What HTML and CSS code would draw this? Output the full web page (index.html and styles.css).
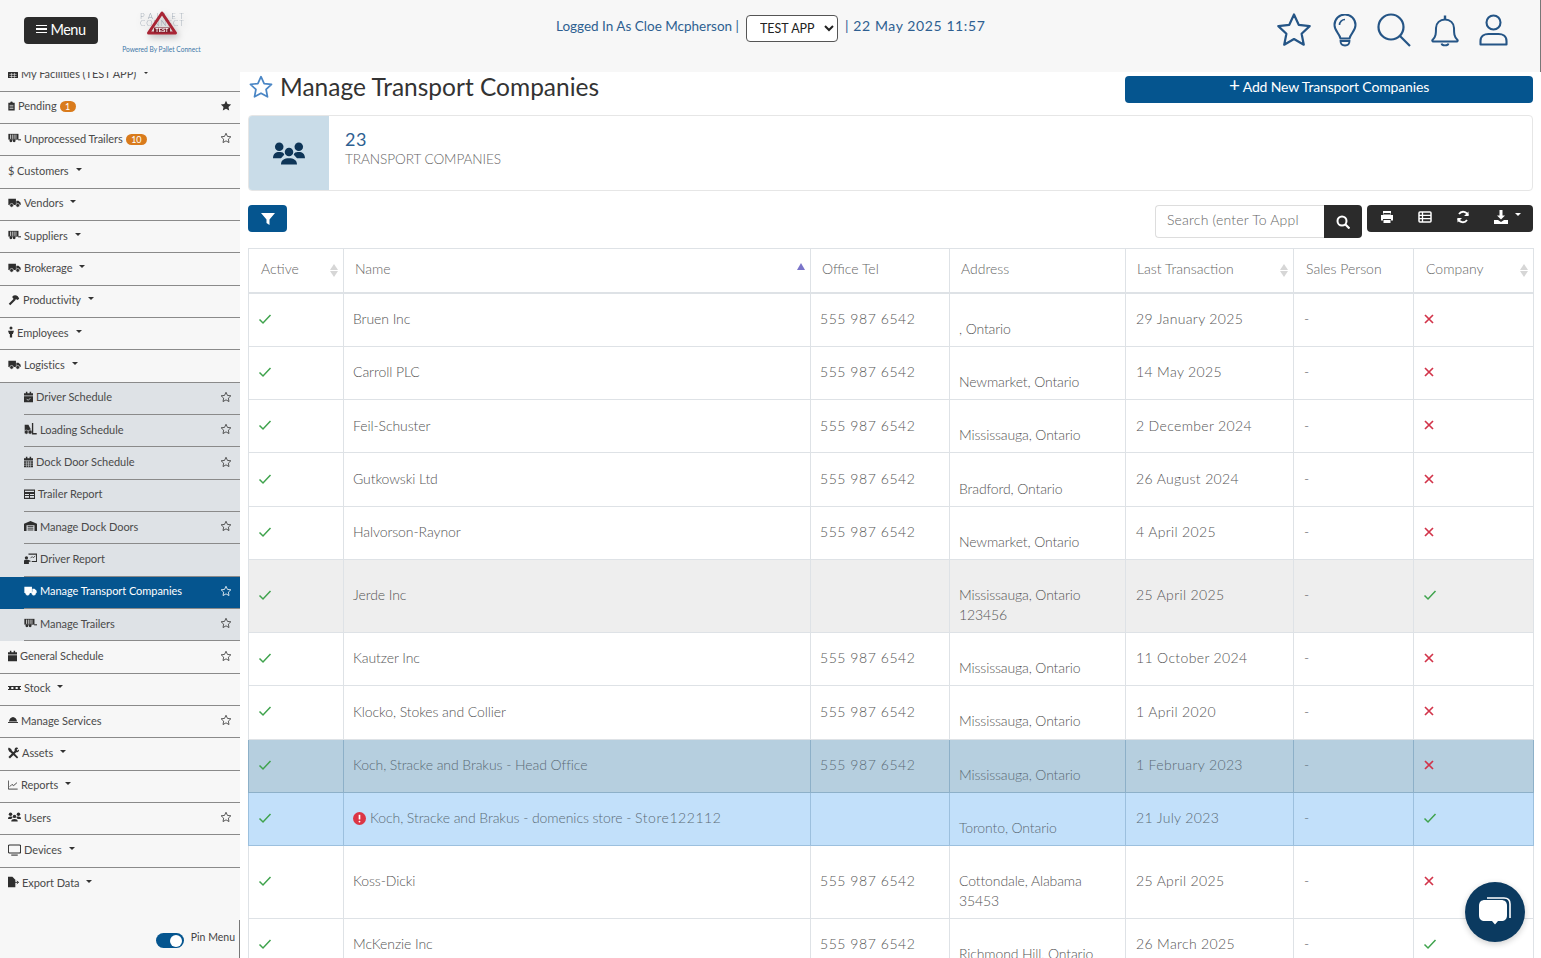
FILE: index.html
```html
<!DOCTYPE html>
<html lang="en">
<head>
<meta charset="utf-8">
<title>Manage Transport Companies</title>
<link rel="stylesheet" href="styles.css">
</head>
<body>
<svg class="defs" width="0" height="0">
  <defs>
    <symbol id="i-star" viewBox="0 0 24 24"><path d="M12 2.500l2.900 6.300 6.800.8-5 4.700 1.300 6.800-6-3.400-6 3.400 1.300-6.800-5-4.700 6.800-.8z" fill="none" stroke="currentColor" stroke-width="1.600" stroke-linejoin="round"/></symbol>
    <symbol id="i-starf" viewBox="0 0 24 24"><path d="M12 1.500l3.100 6.600 7.200.9-5.300 5 1.400 7.200-6.400-3.600-6.400 3.600 1.400-7.200-5.300-5 7.200-.9z" fill="currentColor"/></symbol>
    <symbol id="i-clip" viewBox="2.500 .5 11 15"><path d="M3 3h3a2 2 0 0 1 4 0h3v12H3z" fill="currentColor"/><path d="M5 7h6M5 9.500h6M5 12h6" stroke="#f7f7f7"/></symbol>
    <symbol id="i-trailer" viewBox="0 2.500 18 12.500"><path d="M.5 3h14v8H.5z" fill="currentColor"/><path d="M3.500 4v6M6 4v6M8.500 4v6M11 4v6" stroke="#f7f7f7"/><circle cx="4" cy="12.500" r="2" fill="currentColor"/><circle cx="8.500" cy="12.500" r="2" fill="currentColor"/><path d="M14 10.500h4V12h-4z" fill="currentColor"/></symbol>
    <symbol id="i-truck" viewBox="0 2.500 18 12.500"><path d="M.5 3h10.500v8.500H.5zM11.500 5.500h3l3 3v3h-6z" fill="currentColor"/><circle cx="5" cy="12" r="2.600" fill="currentColor" stroke="#f7f7f7" stroke-width=".8"/><circle cx="13.500" cy="12" r="2.600" fill="currentColor" stroke="#f7f7f7" stroke-width=".8"/></symbol>
    <symbol id="i-hammer" viewBox="0 2 16 14"><path d="M1 14l7-7 2 2-7 7z" fill="currentColor"/><path d="M6 4c2-2 5-2 7 0l2 3-2 2-2-1-2 1-3-3z" fill="currentColor"/></symbol>
    <symbol id="i-person" viewBox="1 0 8 15.500"><circle cx="5" cy="2.500" r="2" fill="currentColor"/><path d="M1 6h8l-1.500 4.500H6.500V15h-3v-4.500H2.500z" fill="currentColor"/></symbol>
    <symbol id="i-calcheck" viewBox="2 1 12 14"><path d="M2 3h12v3H2zM2 7h12v8H2zM4.500 1h2v2h-2zM9.500 1h2v2h-2z" fill="currentColor"/><path d="M5.500 10.500l2 2 3-3" stroke="#dee2e6" fill="none"/></symbol>
    <symbol id="i-cal" viewBox="2 1 12 14"><path d="M2 3h12v3H2zM2 7h12v8H2zM4.500 1h2v2h-2zM9.500 1h2v2h-2z" fill="currentColor"/></symbol>
    <symbol id="i-caldays" viewBox="2 1 12 14"><path d="M2 3h12v3H2zM2 7h12v8H2zM4.500 1h2v2h-2zM9.500 1h2v2h-2z" fill="currentColor"/><path d="M2 9.500h12M2 12.300h12M5.500 7v8M8 7v8M10.500 7v8" stroke="#dee2e6" stroke-width=".7"/></symbol>
    <symbol id="i-fork" viewBox="1 1 15 14.500"><path d="M1.500 8V3h4.500l2.500 5v2.500h-7z" fill="currentColor"/><circle cx="3.500" cy="12" r="2.500" fill="currentColor" stroke="#dee2e6" stroke-width=".6"/><circle cx="8" cy="12" r="2.500" fill="currentColor" stroke="#dee2e6" stroke-width=".6"/><path d="M11 1v13h5" stroke="currentColor" stroke-width="1.600" fill="none"/></symbol>
    <symbol id="i-table" viewBox="1 2 14 12"><path d="M1.500 3h13v10.500h-13z" fill="none" stroke="currentColor" stroke-width="1.500"/><path d="M1.500 6h13v1.500h-13zM1.500 9.800h13M8 6v7" stroke="currentColor" stroke-width="1.300" fill="currentColor"/></symbol>
    <symbol id="i-ware" viewBox="0 1 18 14"><path d="M9 1l9 4v10h-3.500V7h-11v8H0V5z" fill="currentColor"/><path d="M5 8.500h8M5 11h8M5 13.500h8" stroke="currentColor" stroke-width="1.300"/></symbol>
    <symbol id="i-board" viewBox="1 1.500 16 13"><path d="M6.500 2h10v9h-6" fill="none" stroke="currentColor" stroke-width="1.300"/><circle cx="4" cy="6.500" r="2" fill="currentColor"/><path d="M1 14v-3.500c0-1 1-1.500 2-1.500h3l3 1v1.500H7V14z" fill="currentColor"/><path d="M9 7l2-2 1.500 1.500L15 4" stroke="currentColor" fill="none"/></symbol>
    <symbol id="i-pallet" viewBox="0 7 18 6.500"><path d="M0 7.500h18v1.500H0zM0 11.500h18V13H0zM1.500 9h3v2.500h-3zM7.500 9h3v2.500h-3zM13.500 9h3v2.500h-3z" fill="currentColor"/></symbol>
    <symbol id="i-cloche" viewBox="0 4 16 10.500"><path d="M1.500 11.500C2 7.500 5 5 8 4.500c3 .5 6 3 6.500 7z" fill="currentColor"/><path d="M0 12.500h16V14H0z" fill="currentColor"/></symbol>
    <symbol id="i-tools" viewBox="1 1 14 14"><path d="M2 1l3 2 1 2 8 8.500-1.500 1.500L4 7 2.500 6 1 3zM11.500 1c1.500 0 2 .5 2.500 1l-2 2 1 1 2-1.500c.5 2-1.500 4-3.500 3.500L3.500 15 1.500 13l8-8C9 3 10 1 11.500 1z" fill="currentColor"/></symbol>
    <symbol id="i-chart" viewBox="1 2 14 12.500"><path d="M1.500 2v12h13" fill="none" stroke="currentColor" stroke-width="1.200"/><path d="M3.500 10.500l3-3 2.500 1.500 4.500-4" fill="none" stroke="currentColor" stroke-width="1.200"/></symbol>
    <symbol id="i-users" viewBox="1 1.500 18 12.700"><circle cx="4.500" cy="4" r="2.400" fill="currentColor"/><circle cx="15.500" cy="4" r="2.400" fill="currentColor"/><circle cx="10" cy="7" r="2.400" fill="currentColor"/><path d="M1 10.500C1 8 2.500 7 4.500 7S7 7.500 7.300 8.500L5.500 10.500zM19 10.500C19 8 17.500 7 15.500 7S13 7.500 12.700 8.500L14.500 10.500zM5.500 14c0-2.500 2-3.500 4.500-3.500s4.500 1 4.500 3.500z" fill="currentColor"/></symbol>
    <symbol id="i-desk" viewBox="1 1.500 16 13.500"><rect x="1.500" y="2" width="15" height="10" rx="1.500" fill="none" stroke="currentColor" stroke-width="1.300"/><path d="M5 14.500h8" stroke="currentColor" stroke-width="1.300"/></symbol>
    <symbol id="i-export" viewBox="2 1 15 14"><path d="M2 1h6l4 4v10H2z" fill="currentColor"/><path d="M10 8.500h6M14 6.500l2.500 2-2.500 2" stroke="currentColor" stroke-width="1.200" fill="none"/></symbol>
    <symbol id="i-globe" viewBox="1 2 14 11"><path d="M1 5l7-3 7 3v8H1z" fill="currentColor"/><path d="M3 8h10M3 11h10M6 6v7M10 6v7" stroke="#f7f7f7" stroke-width=".8"/></symbol>
    <symbol id="i-check" viewBox="0 0 14 14"><path d="M1.500 7.500l3.500 3.500 7.500-8" fill="none" stroke="currentColor" stroke-width="1.500"/></symbol>
    <symbol id="i-cross" viewBox="2 2 10 10"><path d="M3 3l8 8M11 3l-8 8" fill="none" stroke="currentColor" stroke-width="1.700"/></symbol>
  </defs>
</svg>

<header class="topbar">
  <div class="brand">
    <button class="menu-btn"><span class="burger"><i></i><i></i><i></i></span>Menu</button>
    <div class="logo">
      <svg class="logo-art" width="72" height="38" viewBox="0 0 72 38">
        <text x="36" y="11" class="logo-word" text-anchor="middle" textLength="44">PALLET</text>
        <text x="36" y="18" class="logo-word" text-anchor="middle" textLength="44">CONNECT</text>
        <path d="M36 5L49.500 25H22.500z" fill="none" stroke="#a92535" stroke-width="3" stroke-linejoin="round"/>
        <rect x="28" y="19.500" width="16" height="5" fill="#7d1f2b"/>
        <text x="36" y="24" class="logo-test" text-anchor="middle">TEST</text>
      </svg>
      <span class="powered">Powered By Pallet Connect</span>
    </div>
  </div>
  <div class="session">
    <span class="who">Logged In As Cloe Mcpherson |</span>
    <select class="app-select"><option>TEST APP</option></select>
    <span class="clock">| 22 May 2025 11:57</span>
  </div>
  <div class="quick">
    <svg class="q-star" width="36" height="36" viewBox="0 0 36 36"><path d="M18 2.500l4.700 10.300 11 1.300-8.100 7.600 2.200 11L18 27l-9.800 5.700 2.200-11-8.100-7.600 11-1.300z" fill="none" stroke="currentColor" stroke-width="2.200" stroke-linejoin="round"/></svg>
    <svg class="q-bulb" width="24" height="33" viewBox="0 0 24 33"><path d="M7.500 24.500C6.500 19.500 1.500 17 1.500 11a10.500 10.500 0 0 1 21 0c0 6-5 8.500-6 13.500z" fill="none" stroke="currentColor" stroke-width="2"/><path d="M12 5.500a5.500 5.500 0 0 0-5.500 5.500" fill="none" stroke="currentColor" stroke-width="1.600"/><path d="M7.500 27h9c0 3-2 4.500-4.500 4.500S7.500 30 7.500 27z" fill="none" stroke="currentColor" stroke-width="1.800"/></svg>
    <svg class="q-search" width="34" height="34" viewBox="0 0 34 34"><circle cx="14" cy="14" r="12.500" fill="none" stroke="currentColor" stroke-width="2.200"/><path d="M23 23l10 10" stroke="currentColor" stroke-width="2.200"/></svg>
    <svg class="q-bell" width="28" height="33" viewBox="0 0 28 33"><path d="M1.500 26c3.500-3 3.500-7 3.500-12 0-5 4-8.500 9-8.500s9 3.500 9 8.500c0 5 0 9 3.500 12 .5.500 0 1.500-.5 1.500H2c-.5 0-1-1-.5-1.500z" fill="none" stroke="currentColor" stroke-width="2"/><path d="M14 1.500v4" stroke="currentColor" stroke-width="2.400"/><path d="M10.500 29.500c.5 2.500 6.500 2.500 7 0" fill="none" stroke="currentColor" stroke-width="1.800"/></svg>
    <svg class="q-user" width="29" height="32" viewBox="0 0 29 32"><circle cx="14.500" cy="8.500" r="7" fill="none" stroke="currentColor" stroke-width="2.100"/><path d="M1.500 30.500v-3.500c0-5 4-7 8-7h10c4 0 8 2 8 7v3.500z" fill="none" stroke="currentColor" stroke-width="2.100" stroke-linejoin="round"/></svg>
  </div>
</header>

<div class="shell">
  <aside class="sidebar">
    <nav class="menu">
      <a class="item"><svg class="ic w10"><use href="#i-globe"/></svg>My Facilities (TEST APP)<b class="caret"></b></a>
      <a class="item"><svg class="ic w7"><use href="#i-clip"/></svg>Pending<span class="pill">1</span><svg class="fav"><use href="#i-starf"/></svg></a>
      <a class="item"><svg class="ic w13"><use href="#i-trailer"/></svg>Unprocessed Trailers<span class="pill">10</span><svg class="fav"><use href="#i-star"/></svg></a>
      <a class="item">$ Customers<b class="caret"></b></a>
      <a class="item"><svg class="ic w13"><use href="#i-truck"/></svg>Vendors<b class="caret"></b></a>
      <a class="item"><svg class="ic w13"><use href="#i-trailer"/></svg>Suppliers<b class="caret"></b></a>
      <a class="item"><svg class="ic w13"><use href="#i-truck"/></svg>Brokerage<b class="caret"></b></a>
      <a class="item"><svg class="ic w12"><use href="#i-hammer"/></svg>Productivity<b class="caret"></b></a>
      <a class="item"><svg class="ic w6"><use href="#i-person"/></svg>Employees<b class="caret"></b></a>
      <a class="item"><svg class="ic w13"><use href="#i-truck"/></svg>Logistics<b class="caret"></b></a>
      <div class="sub">
        <a class="sub-item"><span class="sub-in"><svg class="ic w9"><use href="#i-calcheck"/></svg>Driver Schedule<svg class="fav"><use href="#i-star"/></svg></span></a>
        <a class="sub-item"><span class="sub-in"><svg class="ic w13"><use href="#i-fork"/></svg>Loading Schedule<svg class="fav"><use href="#i-star"/></svg></span></a>
        <a class="sub-item"><span class="sub-in"><svg class="ic w9"><use href="#i-caldays"/></svg>Dock Door Schedule<svg class="fav"><use href="#i-star"/></svg></span></a>
        <a class="sub-item"><span class="sub-in"><svg class="ic w11"><use href="#i-table"/></svg>Trailer Report</span></a>
        <a class="sub-item"><span class="sub-in"><svg class="ic w13"><use href="#i-ware"/></svg>Manage Dock Doors<svg class="fav"><use href="#i-star"/></svg></span></a>
        <a class="sub-item"><span class="sub-in"><svg class="ic w13"><use href="#i-board"/></svg>Driver Report</span></a>
        <a class="sub-item active"><span class="sub-in"><svg class="ic w13"><use href="#i-truck"/></svg>Manage Transport Companies<svg class="fav"><use href="#i-star"/></svg></span></a>
        <a class="sub-item"><span class="sub-in"><svg class="ic w13"><use href="#i-trailer"/></svg>Manage Trailers<svg class="fav"><use href="#i-star"/></svg></span></a>
      </div>
      <a class="item"><svg class="ic w9"><use href="#i-cal"/></svg>General Schedule<svg class="fav"><use href="#i-star"/></svg></a>
      <a class="item"><svg class="ic w13"><use href="#i-pallet"/></svg>Stock<b class="caret"></b></a>
      <a class="item"><svg class="ic w10"><use href="#i-cloche"/></svg>Manage Services<svg class="fav"><use href="#i-star"/></svg></a>
      <a class="item"><svg class="ic w11"><use href="#i-tools"/></svg>Assets<b class="caret"></b></a>
      <a class="item"><svg class="ic w10"><use href="#i-chart"/></svg>Reports<b class="caret"></b></a>
      <a class="item"><svg class="ic w13"><use href="#i-users"/></svg>Users<svg class="fav"><use href="#i-star"/></svg></a>
      <a class="item"><svg class="ic w13"><use href="#i-desk"/></svg>Devices<b class="caret"></b></a>
      <a class="item last"><svg class="ic w11"><use href="#i-export"/></svg>Export Data<b class="caret"></b></a>
    </nav>
    <div class="pin">
      <span class="toggle"><i></i></span>
      <span class="pin-label">Pin Menu</span>
    </div>
  </aside>

  <main class="content">
    <div class="title-row">
      <h1 class="title"><svg class="title-star"><use href="#i-star"/></svg>Manage Transport Companies</h1>
      <button class="add-btn"><span class="plus">+</span> Add New Transport Companies</button>
    </div>

    <section class="kpi">
      <div class="kpi-icon"><svg width="32" height="25"><use href="#i-users"/></svg></div>
      <div class="kpi-body">
        <div class="kpi-num">23</div>
        <div class="kpi-label">TRANSPORT COMPANIES</div>
      </div>
    </section>

    <div class="toolbar">
      <button class="filter-btn"><svg width="14" height="14" viewBox="0 0 14 14"><path d="M0 1h14L8.500 7.500V13l-3-2V7.500z" fill="currentColor"/></svg></button>
      <div class="tools">
        <div class="search">
          <input class="search-input" placeholder="Search (enter To Apply)" size="10">
          <button class="search-btn"><svg width="14" height="14" viewBox="0 0 14 14"><circle cx="6" cy="6" r="4.500" fill="none" stroke="currentColor" stroke-width="2"/><path d="M9.500 9.500l4 4" stroke="currentColor" stroke-width="2.200"/></svg></button>
        </div>
        <div class="btn-group">
          <svg width="14" height="14" viewBox="0 0 14 14"><path d="M3 1h8v3.500H3zM1 5h12v5.500h-2V9H3v1.500H1zM3.500 10h7v3h-7z" fill="currentColor"/><path d="M3.500 3.500h7" stroke="#2b2b2b"/></svg>
          <svg width="14" height="14" viewBox="0 0 14 14"><rect x="1" y="2" width="12" height="10" rx="1" fill="none" stroke="currentColor" stroke-width="1.500"/><path d="M1 5.300h12M1 8.600h12M4.500 2v10" stroke="currentColor" stroke-width="1.300"/></svg>
          <svg width="14" height="14" viewBox="0 0 14 14"><path d="M12 5.500A5 5 0 0 0 3 4M2 8.500A5 5 0 0 0 11 10" fill="none" stroke="currentColor" stroke-width="1.800"/><path d="M12.500 1.500v4.500H8zM1.500 12.500V8H6z" fill="currentColor"/></svg>
          <span class="dl"><svg width="14" height="14" viewBox="0 0 14 14"><path d="M5.500 0h3v5.500H11L7 9.500l-4-4h2.500zM0 10h4l3 2 3-2h4v4H0z" fill="currentColor"/></svg><b class="caret caret-w"></b></span>
        </div>
      </div>
    </div>

    <table class="grid">
      <colgroup>
        <col class="c-act"><col class="c-name"><col class="c-tel"><col class="c-addr"><col class="c-last"><col class="c-sales"><col class="c-co">
      </colgroup>
      <thead>
        <tr>
          <th class="sort wide">Active</th>
          <th class="sort-asc">Name</th>
          <th>Office Tel</th>
          <th>Address</th>
          <th class="sort">Last Transaction</th>
          <th class="wide">Sales Person</th>
          <th class="sort wide">Company</th>
        </tr>
      </thead>
      <tbody>
        <tr><td><svg class="yes"><use href="#i-check"/></svg></td><td class="co">Bruen Inc</td><td class="tel">555 987 6542</td><td class="addr">, Ontario</td><td class="date">29 January 2025</td><td class="dash">-</td><td><svg class="no"><use href="#i-cross"/></svg></td></tr>
        <tr><td><svg class="yes"><use href="#i-check"/></svg></td><td class="co">Carroll PLC</td><td class="tel">555 987 6542</td><td class="addr">Newmarket, Ontario</td><td class="date">14 May 2025</td><td class="dash">-</td><td><svg class="no"><use href="#i-cross"/></svg></td></tr>
        <tr><td><svg class="yes"><use href="#i-check"/></svg></td><td class="co">Feil-Schuster</td><td class="tel">555 987 6542</td><td class="addr">Mississauga, Ontario</td><td class="date">2 December 2024</td><td class="dash">-</td><td><svg class="no"><use href="#i-cross"/></svg></td></tr>
        <tr><td><svg class="yes"><use href="#i-check"/></svg></td><td class="co">Gutkowski Ltd</td><td class="tel">555 987 6542</td><td class="addr">Bradford, Ontario</td><td class="date">26 August 2024</td><td class="dash">-</td><td><svg class="no"><use href="#i-cross"/></svg></td></tr>
        <tr><td><svg class="yes"><use href="#i-check"/></svg></td><td class="co">Halvorson-Raynor</td><td class="tel">555 987 6542</td><td class="addr">Newmarket, Ontario</td><td class="date">4 April 2025</td><td class="dash">-</td><td><svg class="no"><use href="#i-cross"/></svg></td></tr>
        <tr class="muted"><td><svg class="yes"><use href="#i-check"/></svg></td><td class="co">Jerde Inc</td><td class="tel"></td><td class="addr">Mississauga, Ontario<br>123456</td><td class="date">25 April 2025</td><td class="dash">-</td><td><svg class="yes"><use href="#i-check"/></svg></td></tr>
        <tr><td><svg class="yes"><use href="#i-check"/></svg></td><td class="co">Kautzer Inc</td><td class="tel">555 987 6542</td><td class="addr">Mississauga, Ontario</td><td class="date">11 October 2024</td><td class="dash">-</td><td><svg class="no"><use href="#i-cross"/></svg></td></tr>
        <tr><td><svg class="yes"><use href="#i-check"/></svg></td><td class="co">Klocko, Stokes and Collier</td><td class="tel">555 987 6542</td><td class="addr">Mississauga, Ontario</td><td class="date">1 April 2020</td><td class="dash">-</td><td><svg class="no"><use href="#i-cross"/></svg></td></tr>
        <tr class="head-office"><td><svg class="yes"><use href="#i-check"/></svg></td><td class="co">Koch, Stracke and Brakus - Head Office</td><td class="tel">555 987 6542</td><td class="addr">Mississauga, Ontario</td><td class="date">1 February 2023</td><td class="dash">-</td><td><svg class="no"><use href="#i-cross"/></svg></td></tr>
        <tr class="store"><td><svg class="yes"><use href="#i-check"/></svg></td><td class="co"><svg class="alert" width="13" height="13" viewBox="0 0 14 14"><circle cx="7" cy="7" r="7" fill="#dc3545"/><path d="M7 3v5" stroke="#fff" stroke-width="1.800"/><circle cx="7" cy="10.300" r="1" fill="#fff"/></svg>Koch, Stracke and Brakus - domenics store - <span class="tel">Store122112</span></td><td class="tel"></td><td class="addr">Toronto, Ontario</td><td class="date">21 July 2023</td><td class="dash">-</td><td><svg class="yes"><use href="#i-check"/></svg></td></tr>
        <tr><td><svg class="yes"><use href="#i-check"/></svg></td><td class="co">Koss-Dicki</td><td class="tel">555 987 6542</td><td class="addr">Cottondale, Alabama<br>35453</td><td class="date">25 April 2025</td><td class="dash">-</td><td><svg class="no"><use href="#i-cross"/></svg></td></tr>
        <tr><td><svg class="yes"><use href="#i-check"/></svg></td><td class="co">McKenzie Inc</td><td class="tel">555 987 6542</td><td class="addr">Richmond Hill, Ontario</td><td class="date">26 March 2025</td><td class="dash">-</td><td><svg class="yes"><use href="#i-check"/></svg></td></tr>
      </tbody>
    </table>
  </main>
</div>

<button class="chat"><svg width="36" height="34" viewBox="0 0 36 34"><path d="M10 3h17c4 0 6 2 6 6v14" fill="none" stroke="#fff" stroke-width="1.600"/><path d="M8 5h16c4 0 6 2 6 6v9c0 4-2 6-6 6h-3l-3 3.500-3-3.500H8c-4 0-6-2-6-6v-9c0-4 2-6 6-6z" fill="#fff"/></svg></button>
</body>
</html>
```
FILE: styles.css
```css
* { box-sizing: border-box; }
html, body { margin: 0; height: 958px; overflow: hidden; }
body { font-family: "Lato", "Liberation Sans", sans-serif; font-weight: 300; color: #555; background: #fff; display: flex; flex-direction: column; }
.defs { position: absolute; }
button { font-family: inherit; border: 0; cursor: pointer; }

.topbar { height: 72px; flex: none; background: #f7f7f7; display: flex; align-items: center; border-right: 1px solid #777; position: relative; z-index: 2; }
.brand { width: 556px; flex: none; display: flex; padding-left: 24px; }
.menu-btn { width: 74px; height: 27px; margin-top: -2px; padding: 0 0 3px; background: #2b2b2b; color: #fff; border-radius: 4px; font-size: 14.500px; font-weight: 400; display: flex; align-items: center; justify-content: center; gap: 3px; letter-spacing: -.5px; }
.burger { display: flex; flex-direction: column; gap: 2px; width: 11px; }
.burger i { display: block; height: 1.500px; background: #fff; }
.logo { margin-left: 24px; width: 79px; display: flex; flex-direction: column; align-items: center; margin-top: -11px; }
.logo-art { display: block; filter: drop-shadow(2px 3px 3px rgba(0,0,0,.25)); }
.logo-word { font-size: 8px; fill: #9aa5b1; }
.logo-test { font-size: 5px; fill: #fff; font-weight: 700; font-family: "Liberation Sans", sans-serif; }
.powered { font-size: 6.600px; color: #3f78a8; white-space: nowrap; margin-top: -1px; font-weight: 400; }

.session { display: flex; align-items: center; gap: 5px; color: #2e5f91; font-size: 13.500px; margin-top: -15px; font-weight: 400; width: 640px; }
.who, .clock { margin-bottom: 6px; }
.who { margin-right: 2px; }
.app-select { width: 92px; height: 27px; font: 400 12.500px "Lato", sans-serif; color: #222; background: #fff; border: 1px solid #555; border-radius: 4px; padding-left: 9px; }
.clock { font-size: 14px; letter-spacing: .6px; margin-left: 2px; }
.quick { margin-left: auto; padding-right: 32px; display: flex; align-items: center; color: #255586; margin-top: -12px; }
.q-star { margin-right: 21px; }
.q-bulb { margin-right: 20px; }
.q-search { margin-right: 20px; }
.q-bell { margin-right: 20px; }

.shell { flex: 1; display: flex; min-height: 0; }
.sidebar { width: 240px; flex: none; background: #f7f7f7; display: flex; flex-direction: column; overflow: hidden; position: relative; }
.menu { flex: 1; margin-top: -12.500px; }
.item { height: 32.33px; display: flex; align-items: center; padding: 0 8px 3px 8px; font-size: 11px; letter-spacing: -.05px; color: #4a4a4a; font-weight: 400; border-bottom: 1px solid #8a8a8a; white-space: nowrap; }
.item.last { border-bottom: 0; }
.sub { background: #dee2e6; }
.sub-item { display: block; height: 32.33px; padding-left: 24px; font-size: 11px; letter-spacing: -.05px; color: #4a4a4a; font-weight: 400; }
.sub-in { display: flex; align-items: center; height: 100%; padding: 0 8px 3px 0; border-bottom: 1px solid #8a8a8a; white-space: nowrap; }
.sub-item.active { background: #05558f; color: #fff; }
.ic { height: 12px; margin-right: 3px; flex: none; color: #2e2e2e; }
.w6 { width: 6px; } .w7 { width: 7px; } .w9 { width: 9px; } .w10 { width: 10px; } .w11 { width: 11px; } .w12 { width: 12px; } .w13 { width: 13px; }
.active .ic { color: #fff; }
.caret { display: inline-block; width: 0; height: 0; margin-left: 7px; margin-top: -2px; border-top: 3.500px solid #333; border-left: 3px solid transparent; border-right: 3px solid transparent; }
.caret-w { border-top-color: #fff; margin-top: -6px; }
.pill { background: #d97b1c; color: #fff; border-radius: 8px; font-size: 9px; padding: 0 5.500px; line-height: 11px; height: 11px; margin: 2px 0 0 3px; }
.fav { width: 12px; height: 12px; margin-left: auto; color: #333; flex: none; }
.active .fav { color: #fff; }
.pin { height: 38px; flex: none; display: flex; justify-content: flex-end; align-items: flex-start; padding-top: 10px; gap: 7px; border-right: 1px solid #777; padding-right: 4px; }
.toggle { width: 28px; height: 15px; background: #05558f; border-radius: 8px; position: relative; margin-top: 3px; }
.toggle i { position: absolute; right: 1.500px; top: 1.500px; width: 12px; height: 12px; border-radius: 50%; background: #fff; }
.pin-label { font-size: 10.500px; color: #444; font-weight: 400; line-height: 14px; }

.content { flex: 1; min-width: 0; padding: 4px 8px 0; overflow: hidden; }
.title-row { display: flex; align-items: flex-start; height: 39px; }
.title { margin: -2px 0 0; font-size: 24.500px; font-weight: 400; color: #333; display: flex; align-items: center; line-height: 26px; }
.title-star { width: 26px; height: 26px; color: #4a86c5; margin-right: 6px; }
.add-btn { margin-left: auto; width: 408px; height: 27px; background: #05558f; color: #fff; border-radius: 4px; font-size: 14px; font-weight: 400; padding: 0 0 7px; letter-spacing: -.15px; }
.plus { font-size: 19px; line-height: 14px; }

.kpi { height: 76px; border: 1px solid #e6e6e6; border-radius: 4px; display: flex; overflow: hidden; }
.kpi-icon { width: 80px; flex: none; background: #c9dce8; color: #0e3557; display: flex; align-items: center; justify-content: center; }
.kpi-body { padding: 12px 16px; }
.kpi-num { font-size: 18px; font-weight: 400; color: #2e5f91; line-height: 22px; letter-spacing: .5px; margin-bottom: 1px; }
.kpi-label { font-size: 13.650px; color: #666; line-height: 17px; letter-spacing: -.1px; }

.toolbar { display: flex; justify-content: space-between; align-items: flex-start; margin-top: 14px; height: 43px; }
.filter-btn { width: 39px; height: 27px; background: #05558f; color: #fff; border-radius: 4px; padding: 0; display: flex; align-items: center; justify-content: center; }
.tools { display: flex; gap: 5px; align-items: flex-start; }
.search { display: flex; }
.search-input { width: 169px; height: 33px; border: 1px solid #ddd; border-right: 0; border-radius: 4px 0 0 4px; padding: 0 25px 5px 11px; font: 300 14px "Lato", sans-serif; letter-spacing: .2px; color: #555; outline: 0; }
.search-input::placeholder { color: #666; opacity: 1; }
.search-btn { width: 38px; height: 33px; background: #2b2b2b; color: #fff; border-radius: 0 4px 4px 0; padding: 0; display: flex; align-items: center; justify-content: center; }
.btn-group { width: 166px; height: 27px; background: #2b2b2b; color: #fff; border-radius: 4px; display: flex; align-items: center; padding: 0 12px 3px 13px; justify-content: space-between; }
.dl { display: flex; align-items: center; }

.grid { width: 1285px; table-layout: fixed; border-collapse: collapse; font-size: 14px; color: #555; }
.c-act { width: 95px; } .c-name { width: 467px; } .c-tel { width: 139px; } .c-addr { width: 176px; } .c-last { width: 168px; } .c-sales { width: 120px; } .c-co { width: 120px; }
.grid th, .grid td { border: 1px solid #dee2e6; padding: 5.670px 9px 7.670px; line-height: 19.500px; text-align: left; font-weight: 300; vertical-align: middle; }
.grid th { height: 44px; padding: 0 11px 4px; border-bottom-width: 2px; position: relative; color: #666; }
.grid th.wide { padding-left: 12px; }
.sort::before, .sort::after { content: ""; position: absolute; right: 5px; border-left: 4px solid transparent; border-right: 4px solid transparent; }
.sort::before { top: 15px; border-bottom: 6px solid #d6d6d6; }
.sort::after { top: 22px; border-top: 6px solid #d6d6d6; }
.sort-asc::after { content: ""; position: absolute; right: 5px; top: 14px; border-bottom: 7px solid #7a74c9; border-left: 4px solid transparent; border-right: 4px solid transparent; }
.co { letter-spacing: -.08px; }
.addr::before { content: ""; display: block; height: 19.500px; }
.addr { letter-spacing: -.12px; }
.tel { letter-spacing: .55px; }
.date { letter-spacing: .35px; }
.grid .date, .grid .dash { padding-left: 10px; }
.yes, .no { display: block; }
.yes { width: 14px; height: 14px; color: #3fa34d; }
.no { width: 10px; height: 10px; color: #d2344a; margin-left: 1px; }
.alert { vertical-align: -2px; margin-right: 4px; }
.muted td { background: #eeeeee; }
.head-office td { background: #b6cfdf; border-color: #8db0c8; color: #5b6b76; }
.store td { background: #c2e0fa; border-color: #9cc0de; color: #5b6b76; }

.chat { position: fixed; left: 1465px; top: 882px; width: 60px; height: 60px; border-radius: 50%; background: #0b3a60; padding: 0; display: flex; align-items: center; justify-content: center; box-shadow: 0 2px 6px rgba(0,0,0,.2); }
```
